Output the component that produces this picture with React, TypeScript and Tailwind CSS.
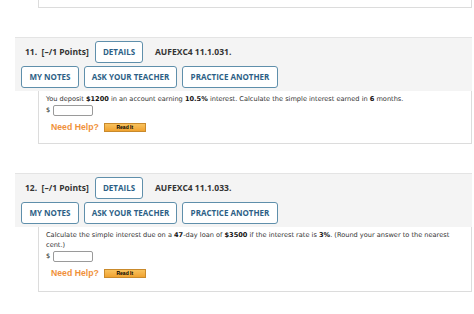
import React from 'react';

const head = { fontFamily: '"Open Sans", "Liberation Sans", sans-serif' };
const body = { fontFamily: '"DejaVu Sans", Verdana, sans-serif' };

const Btn: React.FC<{ label: string; w: string }> = ({ label, w }) => (
  <div
    className={`${w} h-[22px] flex items-center justify-center bg-white border border-[#5f8fab] rounded-[3px] text-[8px] font-bold text-[#2d5f86]`}
  >
    {label}
  </div>
);

const Header: React.FC<{ num: string; code: string }> = ({ num, code }) => (
  <div className="ml-[15px] w-[457px] bg-[#f4f4f4] border-t border-[#e4e4e4] pt-[3px] pb-[3px]" style={head}>
    <div className="flex items-center h-[22px]">
      <span className="ml-[10px] w-[70px] text-[8.5px] font-bold text-[#333] whitespace-pre">{num}.  [–/1 Points]</span>
      <Btn label="DETAILS" w="w-[48px]" />
      <span className="ml-[12px] text-[8.5px] font-bold text-[#333]">{code}</span>
    </div>
    <div className="flex items-center gap-[5px] mt-[3px] ml-[6px]">
      <Btn label="MY NOTES" w="w-[58px]" />
      <Btn label="ASK YOUR TEACHER" w="w-[93px]" />
      <Btn label="PRACTICE ANOTHER" w="w-[96px]" />
    </div>
  </div>
);

const Help: React.FC = () => (
  <div className="flex items-center mt-[6px] ml-[5px]">
    <span className="text-[8.7px] font-bold text-[#f0913a]" style={{ fontFamily: '"Liberation Sans", Arial, sans-serif' }}>
      Need Help?
    </span>
    <div
      className="ml-[5px] w-[42px] h-[9px] flex items-center justify-center bg-gradient-to-b from-[#f8c25c] to-[#f0a22e] border border-[#c98a2c] text-[5px] font-bold text-black"
      style={{ fontFamily: '"Liberation Sans", Arial, sans-serif' }}
    >
      Read It
    </div>
  </div>
);

const Answer: React.FC = () => (
  <div className="flex items-center h-[12px]">
    <span className="w-[7px]">$</span>
    <div className="w-[40px] h-[11px] border border-[#9a9a9a] rounded-[2px] bg-white" />
  </div>
);

export default function App() {
  return (
    <div className="w-[474px] h-[314px] bg-white overflow-hidden">
      <div className="ml-[38px] w-[434px] h-[8px] border border-t-0 border-[#dcdcdc]" />
      <div className="h-[29px]" />
      <Header num="11" code="AUFEXC4 11.1.031." />
      <div className="ml-[38px] w-[434px] h-[53px] border border-t-0 border-[#dcdcdc] pl-[7px] pt-[3px] text-[6.6px] leading-[10px] text-[#333]" style={body}>
        <div>
          You deposit <b className="text-[#111]">$1200</b> in an account earning <b className="text-[#111]">10.5%</b> interest. Calculate the simple interest earned in <b className="text-[#111]">6</b> months.
        </div>
        <Answer />
        <Help />
      </div>
      <div className="h-[29px]" />
      <Header num="12" code="AUFEXC4 11.1.033." />
      <div className="ml-[38px] w-[434px] h-[65px] border border-t-0 border-[#dcdcdc] pl-[7px] pr-[12px] pt-[3px] text-[6.6px] leading-[10px] text-[#333]" style={body}>
        <div>
          Calculate the simple interest due on a <b className="text-[#111]">47</b>-day loan of <b className="text-[#111]">$3500</b> if the interest rate is <b className="text-[#111]">3%</b>. (Round your answer to the nearest cent.)
        </div>
        <Answer />
        <Help />
      </div>
    </div>
  );
}
